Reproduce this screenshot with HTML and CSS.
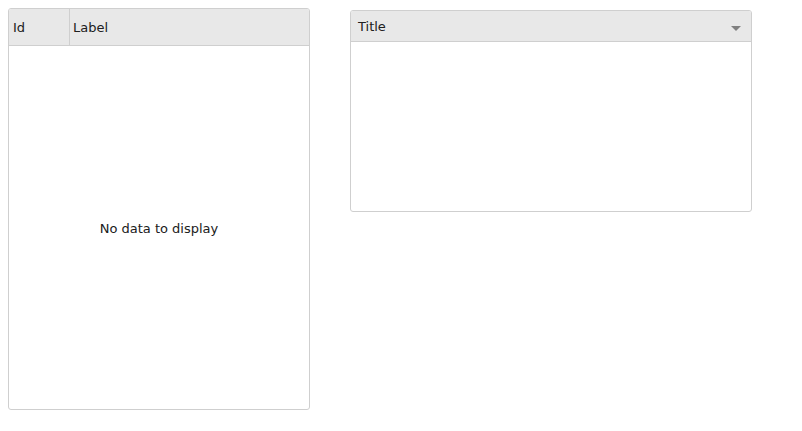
FILE: index.html
```html
<!DOCTYPE html>
<html>
<head>
<meta charset="utf-8">
<link rel="stylesheet" href="styles.css">
</head>
<body>
<div class="page">
  <div class="grid">
    <div class="grid-head">
      <div class="col col-id">Id</div>
      <div class="col col-label">Label</div>
    </div>
    <div class="grid-body">No data to display</div>
  </div>
  <div class="panel">
    <div class="panel-head">
      <span class="panel-title">Title</span>
      <span class="arrow"></span>
    </div>
    <div class="panel-body"></div>
  </div>
</div>
</body>
</html>
```
FILE: styles.css
```css
html, body { margin: 0; padding: 0; background: #fff; }
body {
  font-family: "DejaVu Sans", "Noto Sans", sans-serif;
  font-size: 13px;
  color: #202020;
}
.page {
  display: flex;
  align-items: flex-start;
  padding: 8px 0 0 8px;
  gap: 40px;
}
.grid {
  width: 300px;
  height: 400px;
  border: 1px solid #cfcfcf;
  border-radius: 3px;
  display: flex;
  flex-direction: column;
}
.grid-head {
  display: flex;
  height: 36px;
  background: #e8e8e8;
  border-bottom: 1px solid #cfcfcf;
  border-radius: 2px 2px 0 0;
}
.col {
  display: flex;
  align-items: center;
  padding: 1px 0 0 4px;
}
.col-id {
  width: 56px;
  border-right: 1px solid #cfcfcf;
}
.col-label {
  flex: 1;
  padding-left: 3px;
}
.grid-body {
  flex: 1;
  display: flex;
  align-items: center;
  justify-content: center;
  padding-top: 1px;
}
.panel {
  margin-top: 2px;
  width: 400px;
  height: 200px;
  border: 1px solid #cfcfcf;
  border-radius: 3px;
  display: flex;
  flex-direction: column;
}
.panel-head {
  height: 30px;
  background: #e8e8e8;
  border-bottom: 1px solid #cfcfcf;
  border-radius: 2px 2px 0 0;
  display: flex;
  align-items: center;
  justify-content: space-between;
  padding: 0 10px 0 7px;
}
.arrow {
  width: 0;
  height: 0;
  border-left: 5px solid transparent;
  border-right: 5px solid transparent;
  border-top: 5px solid #808080;
  margin-top: 4px;
}
.panel-body { flex: 1; }
```
